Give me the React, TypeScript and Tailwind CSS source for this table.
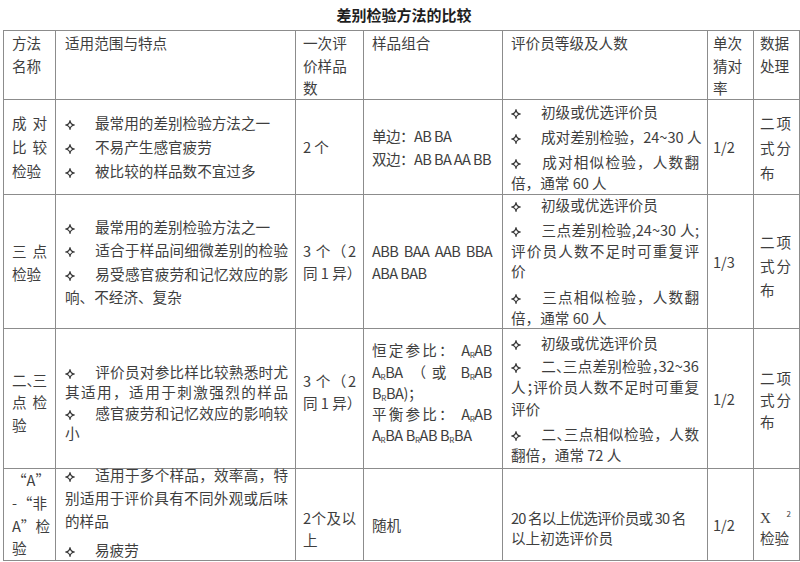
import React from "react";

type P = { children?: React.ReactNode; className?: string };

const J = ({ children, className = "" }: P) => (
  <div className={"text-justify [text-align-last:justify] " + className}>{children}</div>
);
const L = ({ children, className = "" }: P) => (
  <div className={"whitespace-nowrap " + className}>{children}</div>
);
const B = () => (
  <svg
    width="10"
    height="10"
    viewBox="0 0 10 10"
    className="inline-block mr-[20px] align-[-1px]"
  >
    <path
      d="M5 0.6 C5.4 3.7 6.3 4.6 9.4 5 C6.3 5.4 5.4 6.3 5 9.4 C4.6 6.3 3.7 5.4 0.6 5 C3.7 4.6 4.6 3.7 5 0.6Z"
      fill="none"
      stroke="#333333"
      strokeWidth="1.15"
      strokeLinejoin="round"
    />
  </svg>
);
const C = ({ children }: P) => <span className="tracking-[-8px]">{children}</span>;
const Sub = ({ children }: P) => <sub className="text-[8px]">{children}</sub>;

const cell = "bg-white flex flex-col justify-center";
const c1 = "pl-[8px] pr-[8px]";
const c2 = "pl-[9px] pr-[7px]";
const c3 = "pl-[7px] pr-[7px]";
const c4 = "pl-[8px] pr-[10px]";
const c5 = "pl-[8px] pr-[8px]";
const c6 = "pl-[5px] pr-[4px]";
const c7 = "pl-[6px] pr-[8px]";
const head = "bg-white pt-px leading-[22.5px]";

export default function App() {
  return (
    <div className="w-[800px] h-[562px] bg-white text-[#3e3e3e] font-['Noto_Sans_CJK_SC',sans-serif] text-[14.6px]">
      <div className="h-[30px] flex items-center justify-center pl-[8px] text-[15px] font-bold text-[#1e1e1e]">
        差别检验方法的比较
      </div>
      <div className="ml-[3px] w-[797px] grid grid-cols-[51px_239px_67px_138px_204px_45px_45px] grid-rows-[68px_94px_133px_139px_91px] gap-px p-px bg-[#8c8c8c]">
        {/* header */}
        <div className={head + " " + c1}>
          <div>方法</div>
          <div>名称</div>
        </div>
        <div className={head + " " + c2}>适用范围与特点</div>
        <div className={head + " " + c3}>
          <div>一次评</div>
          <div>价样品</div>
          <div>数</div>
        </div>
        <div className={head + " " + c4}>样品组合</div>
        <div className={head + " " + c5}>评价员等级及人数</div>
        <div className={head + " " + c6}>
          <div>单次</div>
          <div>猜对</div>
          <div>率</div>
        </div>
        <div className={head + " " + c7}>
          <div>数据</div>
          <div>处理</div>
        </div>

        {/* row 1 */}
        <div className={cell + " " + c1 + " leading-[24px]"}>
          <J>成对</J>
          <J>比较</J>
          <L>检验</L>
        </div>
        <div className={cell + " " + c2 + " leading-[24px]"}>
          <L><B />最常用的差别检验方法之一</L>
          <L><B />不易产生感官疲劳</L>
          <L><B />被比较的样品数不宜过多</L>
        </div>
        <div className={cell + " " + c3}>
          <L>2 个</L>
        </div>
        <div className={cell + " " + c4 + " leading-[23px] tracking-[-0.6px]"}>
          <L>单边：AB BA</L>
          <L>双边：AB BA AA BB</L>
        </div>
        <div className={cell + " " + c5 + " leading-[21px]"}>
          <L><B />初级或优选评价员</L>
          <L className="mt-[4px]"><B />成对差别检验，24~30 人</L>
          <div className="mt-[4px]">
            <J><B />成对相似检验，人数翻</J>
            <L>倍，通常 60 人</L>
          </div>
        </div>
        <div className={cell + " " + c6}>
          <L>1/2</L>
        </div>
        <div className={cell + " " + c7 + " leading-[25px]"}>
          <J>二项</J>
          <J>式分</J>
          <L>布</L>
        </div>

        {/* row 2 */}
        <div className={cell + " " + c1 + " leading-[23px]"}>
          <J>三点</J>
          <L>检验</L>
        </div>
        <div className={cell + " " + c2 + " leading-[23.5px]"}>
          <L><B />最常用的差别检验方法之一</L>
          <J><B />适合于样品间细微差别的检验</J>
          <J><B />易受感官疲劳和记忆效应的影</J>
          <L>响、不经济、复杂</L>
        </div>
        <div className={cell + " " + c3 + " leading-[22px]"}>
          <J>3 个（2</J>
          <L>同 1 异）</L>
        </div>
        <div className={cell + " " + c4 + " leading-[22px] tracking-[-0.6px]"}>
          <div className="flex justify-between whitespace-nowrap">
            <span>ABB</span>
            <span>BAA</span>
            <span>AAB</span>
            <span>BBA</span>
          </div>
          <L>ABA BAB</L>
        </div>
        <div className={cell + " " + c5 + " leading-[20.5px]"}>
          <L><B />初级或优选评价员</L>
          <div className="mt-[4.5px]">
            <J><B />三点差别检验,24~30 人;</J>
            <J>评价员人数不足时可重复评</J>
            <L>价</L>
          </div>
          <div className="mt-[5.5px]">
            <J><B />三点相似检验，人数翻</J>
            <L>倍，通常 60 人</L>
          </div>
        </div>
        <div className={cell + " " + c6}>
          <L>1/3</L>
        </div>
        <div className={cell + " " + c7 + " leading-[24px] pt-[8px]"}>
          <J>二项</J>
          <J>式分</J>
          <L>布</L>
        </div>

        {/* row 3 */}
        <div className={cell + " " + c1 + " leading-[22.5px] pt-[8px]"}>
          <div className="flex justify-between whitespace-nowrap">
            <span>二<span className="tracking-[-9.6px]">、</span></span>
            <span>三</span>
          </div>
          <J>点检</J>
          <L>验</L>
        </div>
        <div className={cell + " " + c2 + " leading-[20.3px] pt-[8px]"}>
          <J><B />评价员对参比样比较熟悉时尤</J>
          <J>其适用，适用于刺激强烈的样品</J>
          <J><B />感官疲劳和记忆效应的影响较</J>
          <L>小</L>
        </div>
        <div className={cell + " " + c3 + " leading-[22px] pb-[14px]"}>
          <J>3 个（2</J>
          <L>同 1 异）</L>
        </div>
        <div className={cell + " " + c4 + " leading-[21.3px] pb-[12px] tracking-[-0.4px]"}>
          <J>恒定参比： A<Sub>R</Sub>AB</J>
          <J>A<Sub>R</Sub>BA （或 B<Sub>R</Sub>AB</J>
          <L>B<Sub>R</Sub>BA)；</L>
          <J>平衡参比： A<Sub>R</Sub>AB</J>
          <L>A<Sub>R</Sub>BA B<Sub>R</Sub>AB B<Sub>R</Sub>BA</L>
        </div>
        <div className={cell + " " + c5 + " leading-[21.5px]"}>
          <L><B />初级或优选评价员</L>
          <div className="mt-[1.5px]">
            <J><B />二<C>、</C>三点差别检验<C>，</C>32~36</J>
            <J>人<C>；</C>评价员人数不足时可重复</J>
            <L>评价</L>
          </div>
          <div className="mt-[3.5px]">
            <J><B />二<C>、</C>三点相似检验，人数</J>
            <L>翻倍，通常 72 人</L>
          </div>
        </div>
        <div className={cell + " " + c6}>
          <L>1/2</L>
        </div>
        <div className={cell + " " + c7 + " leading-[22px] pt-[3px]"}>
          <J>二项</J>
          <J>式分</J>
          <L>布</L>
        </div>

        {/* row 4 */}
        <div className={cell + " " + c1 + " leading-[22.7px]"}>
          <div className="text-center whitespace-nowrap">“A”</div>
          <div className="flex justify-between whitespace-nowrap">
            <span>-</span>
            <span>“非</span>
          </div>
          <div className="flex justify-between whitespace-nowrap">
            <span>A”</span>
            <span>检</span>
          </div>
          <L>验</L>
        </div>
        <div className={"bg-white flex flex-col justify-start " + c2 + " leading-[23px]"}>
          <div className="mt-[-6px]">
            <J><B />适用于多个样品，效率高，特</J>
            <J>别适用于评价具有不同外观或后味</J>
            <L>的样品</L>
            <L className="mt-[6px]"><B />易疲劳</L>
          </div>
        </div>
        <div className={cell + " " + c3 + " leading-[22px] pt-[29px]"}>
          <J>2个及以</J>
          <L>上</L>
        </div>
        <div className={cell + " " + c4 + " pt-[21px]"}>
          <L>随机</L>
        </div>
        <div className={cell + " " + c5 + " leading-[20px] pt-[26px]"}>
          <L className="tracking-[-0.8px]">20 名以上优选评价员或 30 名</L>
          <L>以上初选评价员</L>
        </div>
        <div className={cell + " " + c6 + " pt-[21px]"}>
          <L>1/2</L>
        </div>
        <div className={cell + " " + c7 + " leading-[20px] pt-[25px]"}>
          <J>
            <span className="font-['Liberation_Serif'] text-[15px]">X</span>{" "}
            <sup className="text-[8px] -top-[6px]">2</sup>
          </J>
          <L>检验</L>
        </div>
      </div>
    </div>
  );
}
